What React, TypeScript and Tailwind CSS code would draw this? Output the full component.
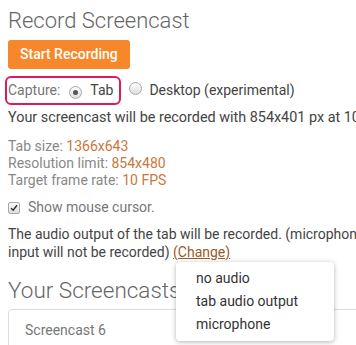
import React from "react";

function Radio({ checked }: { checked?: boolean }) {
  return (
    <span className="inline-flex h-[13px] w-[13px] items-center justify-center rounded-full border border-[#a9a9a9] bg-gradient-to-b from-[#fdfdfd] to-[#dedede]">
      {checked ? <span className="h-[5px] w-[5px] rounded-full bg-[#555]" /> : null}
    </span>
  );
}

export default function App() {
  return (
    <div className="h-[345px] w-[356px] overflow-hidden bg-white" style={{ fontFamily: "Roboto, 'Liberation Sans', sans-serif" }}>
      <div className="relative w-[380px] pl-[8px] text-[14px] text-[#555]">
        <h1 className="pt-[7px] text-[22px] font-light leading-[27px] text-[#666]">Record Screencast</h1>
        <button className="mt-[6px] h-[29px] rounded-[3px] bg-[#f6872a] px-[12px] text-[14px] font-medium text-white">
          Start Recording
        </button>
        <div className="mt-[7px] flex items-center">
          <div className="-ml-[3px] flex h-[29px] items-center rounded-[6px] border-2 border-[#e0195f] pl-[1px] pr-[6px]">
            <span className="text-[#777]">Capture:</span>
            <span className="ml-[9px]"><Radio checked /></span>
            <span className="ml-[8px] text-[#444]">Tab</span>
          </div>
          <span className="ml-[8px]"><Radio /></span>
          <span className="ml-[7px] text-[#444]">Desktop (experimental)</span>
        </div>
        <p className="mt-[4px] whitespace-nowrap text-[14.4px] leading-[18px] text-[#444]">Your screencast will be recorded with 854x401 px at 10 FPS.</p>
        <div className="mt-[11px] leading-[17px] text-[#888]">
          <div>Tab size: <span className="text-[#c9773c]">1366x643</span></div>
          <div>Resolution limit: <span className="text-[#c9773c]">854x480</span></div>
          <div>Target frame rate: <span className="text-[#c9773c]">10 FPS</span></div>
        </div>
        <label className="mt-[8px] flex items-center text-[#777]">
          <span className="relative inline-flex h-[12px] w-[12px] items-center justify-center rounded-[2px] border border-[#aaa] bg-gradient-to-b from-[#fafafa] to-[#ddd]">
            <svg viewBox="0 0 12 12" className="h-[10px] w-[10px]">
              <path d="M2.5 6.2 L5 8.6 L9.6 2.8" fill="none" stroke="#333" strokeWidth="1.8" />
            </svg>
          </span>
          <span className="ml-[8px]">Show mouse cursor.</span>
        </label>
        <p className="mt-[7px] leading-[18px] text-[#444]">
          The audio output of the tab will be recorded. (microphone input will not be recorded){" "}
          <span className="text-[#9c5a2a] underline">(Change)</span>
        </p>
        <h2 className="mt-[15px] text-[22.5px] font-light leading-[28px] text-[#666]">Your Screencasts</h2>
        <div className="mt-[5px] h-[60px] rounded-[4px] border border-[#ddd] pl-[16px] pt-[10px] text-[#777]">
          Screencast 6
        </div>
        <div className="absolute left-[176px] top-[262px] w-[158px] rounded-[4px] bg-white py-[5px] text-[#333] shadow-[0_1px_5px_rgba(0,0,0,0.3)]">
          <div className="h-[23px] pl-[20px] leading-[23px]">no audio</div>
          <div className="h-[23px] pl-[20px] leading-[23px]">tab audio output</div>
          <div className="h-[23px] pl-[20px] leading-[23px]">microphone</div>
        </div>
      </div>
    </div>
  );
}
